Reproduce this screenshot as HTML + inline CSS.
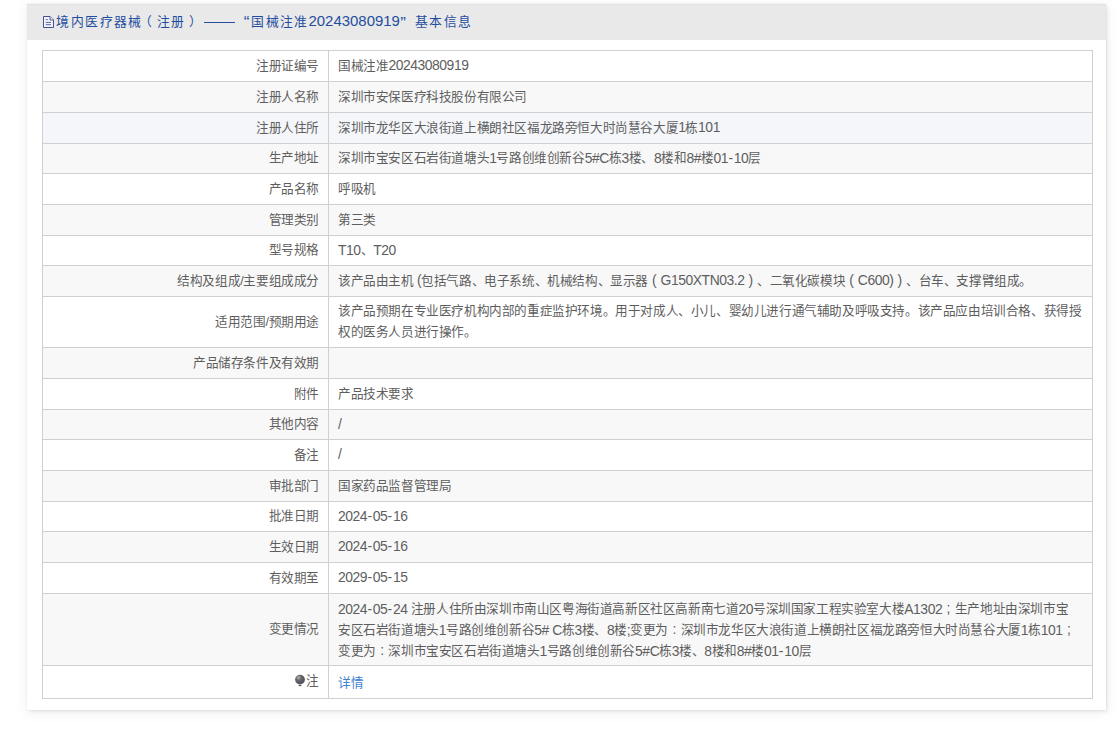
<!DOCTYPE html>
<html lang="zh-CN">
<head>
<meta charset="utf-8">
<style>
html,body{margin:0;padding:0;background:#fff;width:1120px;height:738px;overflow:hidden;}
body{font-family:"Liberation Sans",sans-serif;position:relative;}
.panel{position:absolute;left:27px;top:4px;width:1079px;height:706px;background:#fff;box-shadow:0 0 1px rgba(0,0,0,0.14),2px 2px 3px rgba(0,0,0,0.06),0 2px 13px rgba(0,0,0,0.07);}
.hd{position:absolute;left:0;top:0;width:1079px;height:36px;background:#e9e9e9;box-shadow:inset 0 1px 0 #e2e2e2;}
.title{position:absolute;left:29px;top:0;height:36px;line-height:36px;font-size:14.4px;color:#2563ad;white-space:nowrap;}
.icon{position:absolute;left:16px;top:11px;}
.tb{position:absolute;left:42px;top:50px;width:1049px;height:647px;border:1px solid #d0d0d0;}
.cl{position:absolute;left:328px;top:50px;width:1px;height:648px;background:#d0d0d0;}
.r{position:absolute;left:43px;width:1049px;border-top:1px solid #d0d0d0;}
.r.g{background:#f8f8f8;}
.r.h{background:#f4f6fa;}
.l{position:absolute;left:0;width:276px;text-align:right;color:#5e5e5e;font-size:12.6px;line-height:21px;white-space:nowrap;}
.v{position:absolute;left:295px;color:#5e5e5e;font-size:12.6px;line-height:21px;white-space:nowrap;}
.n{font-size:13.9px;letter-spacing:-0.45px;line-height:1px;position:relative;top:0.6px;}
.hy{font-weight:normal;letter-spacing:0.7px;padding-left:0.3px;}
.l,.v{letter-spacing:-0.4px;text-spacing-trim:space-all;}
.t{position:absolute;top:12.2px;line-height:20px;font-size:12.8px;letter-spacing:1.4px;color:#1f4e9e;white-space:nowrap;text-spacing-trim:space-all;}
.t.tn{font-size:14.95px;letter-spacing:0;top:11.2px;}
.fw{font-style:normal;display:inline-block;width:12.6px;text-align:center;letter-spacing:0;font-size:13.9px;line-height:1px;}
.pin{vertical-align:-1px;margin-right:1px;}
a{color:#3f7fd0;text-decoration:none;}
</style>
</head>
<body>
<div class="panel"><div class="hd"></div></div>
<svg class="icon" width="11" height="12" viewBox="0 0 11 12" style="position:absolute;left:43px;top:16px"><path d="M0.5 0.5H7L10.5 4V11.5H0.5Z" fill="#f2f3fb" stroke="#3b4a8e" stroke-width="0.95"/><path d="M7 0.5V4H10.5" fill="#dde2f4" stroke="#3b4a8e" stroke-width="0.8"/><path d="M2.8 3.6h2M2.8 6.4h5.2M2.8 8.7h5.2" stroke="#4a5898" stroke-width="0.9"/></svg>
<div class="t" style="left:56.4px">境内医疗器械</div>
<div class="t" style="left:139.3px">（</div>
<div class="t" style="left:157px">注册</div>
<div class="t" style="left:189.3px">）</div>
<div style="position:absolute;left:204px;top:22.2px;width:31px;height:1px;background:#24509e"></div>
<div class="t" style="left:243.8px;font-size:17px;top:13.3px">“</div>
<div class="t" style="left:251.2px">国械注准</div>
<div class="t tn" style="left:308.5px">20243080919</div>
<div class="t" style="left:400.2px;font-size:17px;top:14.3px">”</div>
<div class="t" style="left:415px">基本信息</div>
<div class="r" style="top:50px;height:30px"><div class="l" style="top:4.50px">注册证编号</div><div class="v" style="top:4.50px;line-height:21px">国械注准<span class="n">20243080919</span></div></div>
<div class="r g" style="top:81px;height:30px"><div class="l" style="top:4.50px">注册人名称</div><div class="v" style="top:4.50px;line-height:21px">深圳市安保医疗科技股份有限公司</div></div>
<div class="r h" style="top:112px;height:30px"><div class="l" style="top:4.50px">注册人住所</div><div class="v" style="top:4.50px;line-height:21px">深圳市龙华区大浪街道上横朗社区福龙路旁恒大时尚慧谷大厦<span class="n">1</span>栋<span class="n">101</span></div></div>
<div class="r g" style="top:143px;height:29px"><div class="l" style="top:4.00px">生产地址</div><div class="v" style="top:4.00px;line-height:21px">深圳市宝安区石岩街道塘头<span class="n">1</span>号路创维创新谷<span class="n">5#C</span>栋<span class="n">3</span>楼、<span class="n">8</span>楼和<span class="n">8#</span>楼<span class="n">01<b class="hy">-</b>10</span>层</div></div>
<div class="r" style="top:173px;height:30px"><div class="l" style="top:4.50px">产品名称</div><div class="v" style="top:4.50px;line-height:21px">呼吸机</div></div>
<div class="r g" style="top:204px;height:30px"><div class="l" style="top:4.50px">管理类别</div><div class="v" style="top:4.50px;line-height:21px">第三类</div></div>
<div class="r" style="top:235px;height:29px"><div class="l" style="top:4.00px">型号规格</div><div class="v" style="top:4.00px;line-height:21px"><span class="n">T10</span>、<span class="n">T20</span></div></div>
<div class="r g" style="top:265px;height:30px"><div class="l" style="top:4.50px">结构及组成/主要组成成分</div><div class="v" style="top:4.50px;line-height:21px">该产品由主机<span class="n"> (</span>包括气路、电子系统、机械结构、显示器<i class="fw">(</i><span class="n">G150XTN03.2</span><i class="fw">)</i>、二氧化碳模块<i class="fw">(</i><span class="n">C600)</span><i class="fw">)</i>、台车、支撑臂组成。</div></div>
<div class="r" style="top:296px;height:50px"><div class="l" style="top:14.50px">适用范围/预期用途</div><div class="v" style="top:4.00px;line-height:21px">该产品预期在专业医疗机构内部的重症监护环境。用于对成人、小儿、婴幼儿进行通气辅助及呼吸支持。该产品应由培训合格、获得授<br>权的医务人员进行操作。</div></div>
<div class="r g" style="top:347px;height:30px"><div class="l" style="top:4.50px">产品储存条件及有效期</div><div class="v" style="top:4.50px;line-height:21px"></div></div>
<div class="r" style="top:378px;height:30px"><div class="l" style="top:4.50px">附件</div><div class="v" style="top:4.50px;line-height:21px">产品技术要求</div></div>
<div class="r g" style="top:409px;height:29px"><div class="l" style="top:4.00px">其他内容</div><div class="v" style="top:4.00px;line-height:21px"><span class="n">/</span></div></div>
<div class="r" style="top:439px;height:30px"><div class="l" style="top:4.50px">备注</div><div class="v" style="top:4.50px;line-height:21px"><span class="n">/</span></div></div>
<div class="r g" style="top:470px;height:30px"><div class="l" style="top:4.50px">审批部门</div><div class="v" style="top:4.50px;line-height:21px">国家药品监督管理局</div></div>
<div class="r" style="top:501px;height:29px"><div class="l" style="top:4.00px">批准日期</div><div class="v" style="top:4.00px;line-height:21px"><span class="n">2024<b class="hy">-</b>05<b class="hy">-</b>16</span></div></div>
<div class="r g" style="top:531px;height:30px"><div class="l" style="top:4.50px">生效日期</div><div class="v" style="top:4.50px;line-height:21px"><span class="n">2024<b class="hy">-</b>05<b class="hy">-</b>16</span></div></div>
<div class="r" style="top:562px;height:30px"><div class="l" style="top:4.50px">有效期至</div><div class="v" style="top:4.50px;line-height:21px"><span class="n">2029<b class="hy">-</b>05<b class="hy">-</b>15</span></div></div>
<div class="r g" style="top:593px;height:71px"><div class="l" style="top:25.00px">变更情况</div><div class="v" style="top:5.00px;line-height:21px"><span class="n">2024<b class="hy">-</b>05<b class="hy">-</b>24 </span>注册人住所由深圳市南山区粤海街道高新区社区高新南七道<span class="n">20</span>号深圳国家工程实验室大楼<span class="n">A1302</span><i class="fw">;</i>生产地址由深圳市宝<br>安区石岩街道塘头<span class="n">1</span>号路创维创新谷<span class="n">5# C</span>栋<span class="n">3</span>楼、<span class="n">8</span>楼<span class="n">;</span>变更为<i class="fw">:</i>深圳市龙华区大浪街道上横朗社区福龙路旁恒大时尚慧谷大厦<span class="n">1</span>栋<span class="n">101</span><i class="fw">;</i><br>变更为<i class="fw">:</i>深圳市宝安区石岩街道塘头<span class="n">1</span>号路创维创新谷<span class="n">5#C</span>栋<span class="n">3</span>楼、<span class="n">8</span>楼和<span class="n">8#</span>楼<span class="n">01<b class="hy">-</b>10</span>层</div></div>
<div class="r" style="top:665px;height:32px"><div class="l" style="top:4.50px"><span style="position:relative;display:inline-block"><svg class="pin" width="11" height="14" viewBox="0 0 11 14" style="position:absolute;left:-11.2px;top:3.7px"><defs><radialGradient id="pg" cx="0.35" cy="0.3" r="0.75"><stop offset="0" stop-color="#b8b8b8"/><stop offset="0.35" stop-color="#6a6a6a"/><stop offset="1" stop-color="#4a4a5a"/></radialGradient></defs><circle cx="5" cy="5.6" r="4.9" fill="url(#pg)"/><rect x="3.6" y="11" width="2.8" height="1.1" fill="#555"/></svg><span style="position:relative">注</span></span></div><div class="v" style="top:6.50px;line-height:21px"><a>详情</a></div></div>
<div class="tb"></div>
<div class="cl"></div>
</body>
</html>
